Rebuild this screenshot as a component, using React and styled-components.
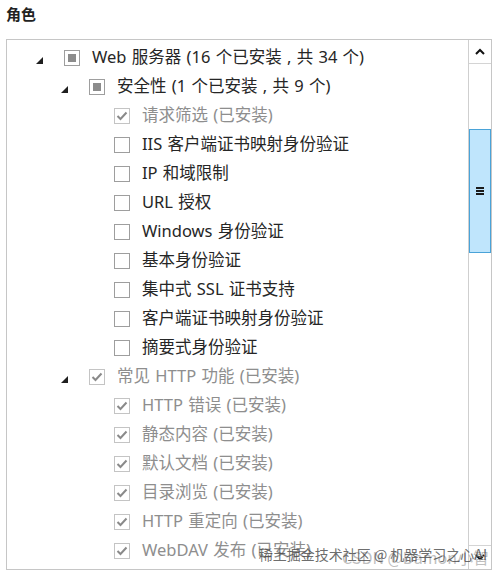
import React from 'react';
import styled, { createGlobalStyle } from 'styled-components';

const GlobalStyle = createGlobalStyle`
  html, body {
    margin: 0;
    padding: 0;
    background: #ffffff;
  }
  body {
    font-family: "Noto Sans", "Noto Sans CJK SC", sans-serif;
  }
`;

const Page = styled.div`
  position: relative;
  width: 497px;
  height: 578px;
  overflow: hidden;
  background: #fff;
`;

const Title = styled.div`
  height: 39px;
  padding-left: 6px;
  box-sizing: border-box;
  padding-top: 3px;
  font-family: "Noto Sans CJK SC", sans-serif;
  font-weight: 700;
  font-size: 15px;
  color: #222;
`;

const Frame = styled.div`
  margin-left: 6px;
  width: 486px;
  height: 531px;
  box-sizing: border-box;
  border: 1px solid #c6c6c6;
  display: flex;
`;

const List = styled.div`
  flex: 1;
  overflow: hidden;
  padding-top: 3px;
`;

const Row = styled.div`
  height: 29px;
  display: flex;
  align-items: center;
  padding-left: ${(p) => 26 + p.$level * 25}px;
  white-space: nowrap;
`;

const Expander = styled.div`
  width: 31px;
  flex-shrink: 0;
  display: flex;
  align-items: center;
  height: 100%;
  padding-left: 3px;
  padding-top: 5px;
  box-sizing: border-box;
`;

const Box = styled.div`
  width: 16px;
  height: 16px;
  box-sizing: border-box;
  flex-shrink: 0;
  border: 1px solid ${(p) => (p.$disabled ? '#c4c4c4' : '#9e9e9e')};
  background: #fff;
  display: flex;
  align-items: center;
  justify-content: center;
  margin-right: 12px;
`;

const Fill = styled.div`
  width: 8px;
  height: 8px;
  background: #8c8c8c;
`;

const Label = styled.span`
  font-size: 16.5px;
  color: ${(p) => (p.$disabled ? '#8e8e8e' : '#262626')};
  line-height: 1;
  word-spacing: 1px;
`;

const ScrollBar = styled.div`
  width: 22px;
  flex-shrink: 0;
  border-left: 1px solid #cfcfcf;
  display: flex;
  flex-direction: column;
`;

const Arrow = styled.div`
  height: 23px;
  flex-shrink: 0;
  display: flex;
  align-items: center;
  justify-content: center;
  border-${(p) => (p.$down ? 'top' : 'bottom')}: 1px solid #d4d4d4;
`;

const Track = styled.div`
  flex: 1;
`;

const Thumb = styled.div`
  margin-top: 65px;
  height: 124px;
  box-sizing: border-box;
  border: 1px solid #4aa3d8;
  background: #bfe5fc;
  display: flex;
  flex-direction: column;
  align-items: center;
  justify-content: center;
  gap: 1px;
`;

const Grip = styled.div`
  width: 8px;
  height: 2px;
  background: #1a1a1a;
`;

const Mark = styled.div`
  position: absolute;
  right: ${(p) => p.$right}px;
  bottom: ${(p) => p.$bottom}px;
  font-family: "Noto Sans CJK SC", sans-serif;
  font-size: ${(p) => p.$size}px;
  color: ${(p) => p.$color};
  white-space: nowrap;
  pointer-events: none;
`;

const Tri = () => (
  <svg width="7" height="7" viewBox="0 0 7 7">
    <polygon points="7,0 7,7 0,7" fill="#1f1f1f" />
  </svg>
);

const Check = () => (
  <svg width="12" height="10" viewBox="0 0 12 10">
    <path d="M1.5 5 L4.5 8 L10.5 1.5" fill="none" stroke="#8a8a8a" strokeWidth="2" />
  </svg>
);

const rows = [
  { level: 0, exp: true, state: 'mixed', text: 'Web 服务器 (16 个已安装 , 共 34 个)' },
  { level: 1, exp: true, state: 'mixed', text: '安全性 (1 个已安装 , 共 9 个)' },
  { level: 2, state: 'checked', disabled: true, text: '请求筛选 (已安装)' },
  { level: 2, state: 'off', text: 'IIS 客户端证书映射身份验证' },
  { level: 2, state: 'off', text: 'IP 和域限制' },
  { level: 2, state: 'off', text: 'URL 授权' },
  { level: 2, state: 'off', text: 'Windows 身份验证' },
  { level: 2, state: 'off', text: '基本身份验证' },
  { level: 2, state: 'off', text: '集中式 SSL 证书支持' },
  { level: 2, state: 'off', text: '客户端证书映射身份验证' },
  { level: 2, state: 'off', text: '摘要式身份验证' },
  { level: 1, exp: true, state: 'checked', disabled: true, text: '常见 HTTP 功能 (已安装)' },
  { level: 2, state: 'checked', disabled: true, text: 'HTTP 错误 (已安装)' },
  { level: 2, state: 'checked', disabled: true, text: '静态内容 (已安装)' },
  { level: 2, state: 'checked', disabled: true, text: '默认文档 (已安装)' },
  { level: 2, state: 'checked', disabled: true, text: '目录浏览 (已安装)' },
  { level: 2, state: 'checked', disabled: true, text: 'HTTP 重定向 (已安装)' },
  { level: 2, state: 'checked', disabled: true, text: 'WebDAV 发布 (已安装)' },
];

export default function App() {
  return (
    <Page>
      <GlobalStyle />
      <Title>角色</Title>
      <Frame>
        <List>
          {rows.map((r, i) => (
            <Row key={i} $level={r.level}>
              <Expander>{r.exp && <Tri />}</Expander>
              <Box $disabled={r.disabled}>
                {r.state === 'mixed' && <Fill />}
                {r.state === 'checked' && <Check />}
              </Box>
              <Label $disabled={r.disabled}>{r.text}</Label>
            </Row>
          ))}
        </List>
        <ScrollBar>
          <Arrow>
            <svg width="10" height="7" viewBox="0 0 10 7">
              <path d="M1 6 L5 2 L9 6" fill="none" stroke="#111" strokeWidth="2" />
            </svg>
          </Arrow>
          <Track>
            <Thumb>
              <Grip />
              <Grip />
              <Grip />
            </Thumb>
          </Track>
          <Arrow $down>
            <svg width="10" height="7" viewBox="0 0 10 7">
              <path d="M1 1 L5 5 L9 1" fill="none" stroke="#111" strokeWidth="2" />
            </svg>
          </Arrow>
        </ScrollBar>
      </Frame>
      <Mark $right={8} $bottom={9} $size={16} $color="rgba(170,170,170,0.75)">CSDN @Damon小智</Mark>
      <Mark $right={10} $bottom={14} $size={14} $color="rgba(70,70,70,0.8)">稀土掘金技术社区 @ 机器学习之心AI</Mark>
    </Page>
  );
}
